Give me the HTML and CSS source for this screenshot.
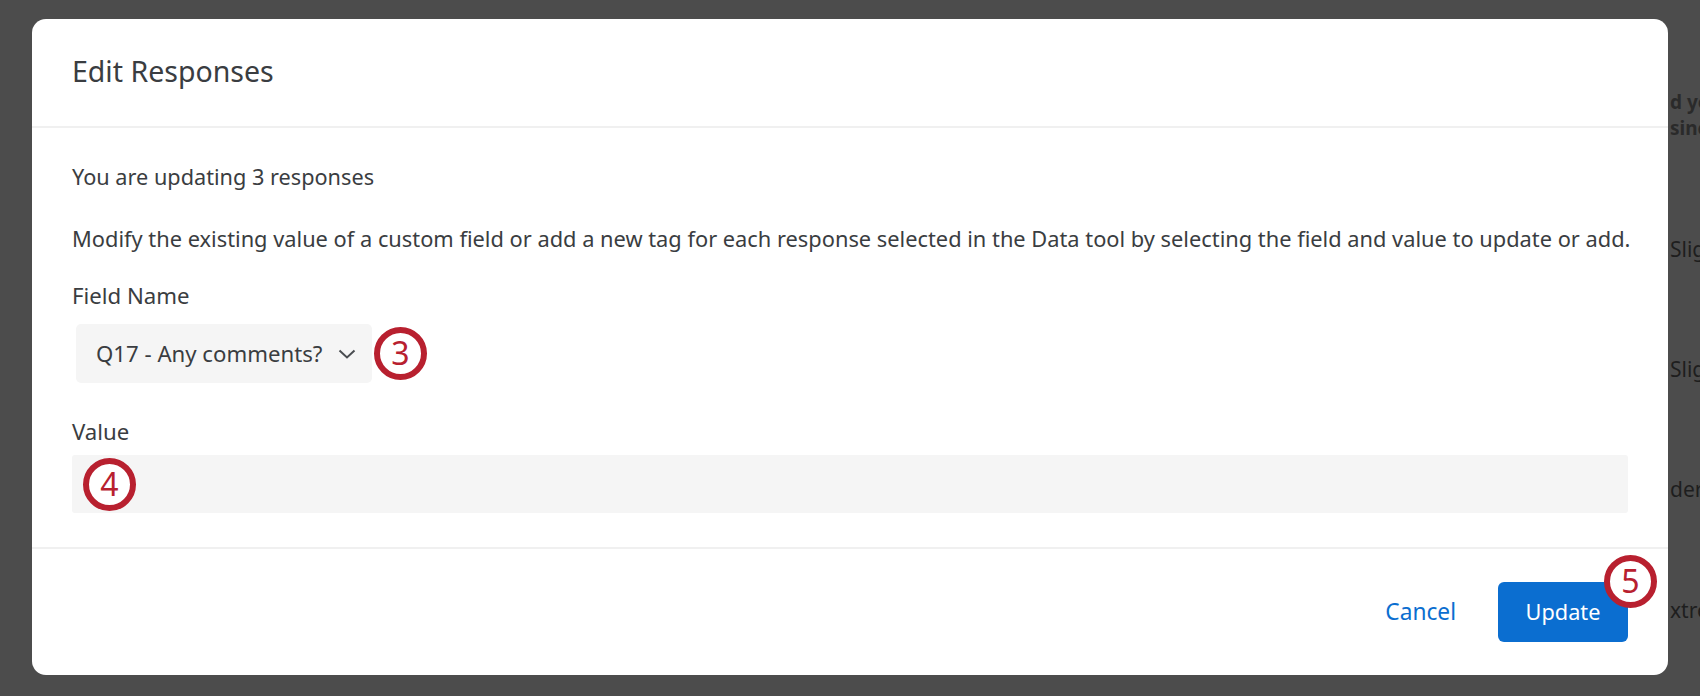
FILE: index.html
```html
<!DOCTYPE html>
<html lang="en">
<head>
    <meta charset="UTF-8">
    <title>Edit Responses</title>
    <link rel="stylesheet" href="styles.css">
</head>
<body>
    <!-- Dimmed page behind the dialog -->
    <div class="backdrop">
        <div class="backdrop-intro">
            <div>d you</div>
            <div>sinc</div>
        </div>
        <div class="backdrop-row">Slig</div>
        <div class="backdrop-row">Slig</div>
        <div class="backdrop-row backdrop-row-short">der</div>
        <div class="backdrop-row backdrop-row-last">xtre</div>
    </div>

    <!-- Dialog -->
    <div class="modal">
        <header class="modal-header">
            <h1>Edit Responses</h1>
        </header>

        <div class="modal-body">
            <p class="summary">You are updating 3 responses</p>
            <p class="description">Modify the existing value of a custom field or add a new tag for each response selected in the Data tool by selecting the field and value to update or add.</p>

            <div class="field-label">Field Name</div>
            <div class="select-row">
                <div class="select-box">
                    <span>Q17 - Any comments?</span>
                    <svg class="chevron" width="18" height="10" viewBox="0 0 18 10">
                        <path d="M1.5 1.5 L9 8.5 L16.5 1.5" fill="none" stroke="#4a4d51" stroke-width="2"/>
                    </svg>
                </div>
                <div class="step-badge">3</div>
            </div>

            <div class="field-label value-label">Value</div>
            <div class="value-input">
                <div class="step-badge step-badge-input">4</div>
            </div>
        </div>

        <footer class="modal-footer">
            <a class="cancel-link" href="#">Cancel</a>
            <div class="update-wrap">
                <button class="update-button">Update</button>
                <div class="step-badge step-badge-update">5</div>
            </div>
        </footer>
    </div>
</body>
</html>
```

FILE: styles.css
```css
/* General Styles */
body {
    margin: 0;
    height: 696px;
    overflow: hidden;
    background-color: #4c4c4c;
    font-family: 'Noto Sans', sans-serif;
    color: #3a3d41;
}

/* Page behind the dialog */
.backdrop {
    height: 696px;
    padding-left: 1670px;
    font-size: 21px;
    color: #1e1e1e;
    white-space: nowrap;
    overflow: hidden;
}

.backdrop-intro {
    padding-top: 89px;
    height: 146px;
    font-size: 19px;
    font-weight: 700;
    line-height: 26px;
    color: #2a2a2a;
}

.backdrop-row {
    height: 120px;
    line-height: 28px;
}

.backdrop-row-short {
    height: 121px;
}

.backdrop-row-last {
    height: 60px;
}

/* Dialog */
.modal {
    position: absolute;
    top: 19px;
    left: 32px;
    width: 1636px;
    height: 656px;
    background-color: #fff;
    border-radius: 14px;
    display: flex;
    flex-direction: column;
}

.modal-header {
    height: 107px;
    padding-left: 40px;
    border-bottom: 2px solid #f0f0f0;
    flex-shrink: 0;
}

.modal-header h1 {
    margin: 0;
    padding-top: 33px;
    font-size: 28.5px;
    font-weight: 400;
    line-height: 38px;
}

.modal-body {
    height: 419px;
    padding: 0 40px;
    border-bottom: 2px solid #f0f0f0;
    flex-shrink: 0;
    font-size: 21.7px;
    line-height: 28px;
}

.summary {
    margin: 35px 0 0;
}

.description {
    margin: 34px 0 0;
    font-size: 21.82px;
    white-space: nowrap;
}

.field-label {
    margin-top: 29px;
    font-size: 22.2px;
}

.value-label {
    margin-top: 35px;
}

/* Field Name select */
.select-row {
    display: flex;
    align-items: center;
    margin-top: 14px;
    margin-left: 4px;
    gap: 2px;
}

.select-box {
    width: 296px;
    height: 59px;
    box-sizing: border-box;
    padding: 0 16px 0 20px;
    display: flex;
    align-items: center;
    justify-content: space-between;
    background-color: #f5f5f5;
    border-radius: 5px;
    font-size: 22.2px;
    white-space: nowrap;
}

.chevron {
    flex-shrink: 0;
}

/* Value input */
.value-input {
    position: relative;
    height: 58px;
    margin-top: 9px;
    background-color: #f5f5f5;
    border-radius: 3px;
}

/* Numbered step markers */
.step-badge {
    width: 53px;
    height: 53px;
    box-sizing: border-box;
    flex-shrink: 0;
    border: 6px solid #b8202f;
    border-radius: 50%;
    background-color: #fff;
    color: #b8202f;
    font-size: 32px;
    line-height: 39px;
    text-align: center;
}

.step-badge-input {
    position: absolute;
    top: 3px;
    left: 11px;
}

.step-badge-update {
    position: absolute;
    top: -27px;
    right: -29px;
}

/* Footer */
.modal-footer {
    flex: 1;
    display: flex;
    align-items: center;
    justify-content: flex-end;
    padding: 0 40px 1px;
}

.cancel-link {
    color: #0b6ed0;
    font-size: 22.7px;
    text-decoration: none;
    margin-right: 42px;
}

.update-wrap {
    position: relative;
}

.update-button {
    display: block;
    width: 130px;
    height: 60px;
    border: none;
    border-radius: 6px;
    background-color: #0b6ed0;
    color: #fff;
    font-family: inherit;
    font-size: 21.7px;
}
```
